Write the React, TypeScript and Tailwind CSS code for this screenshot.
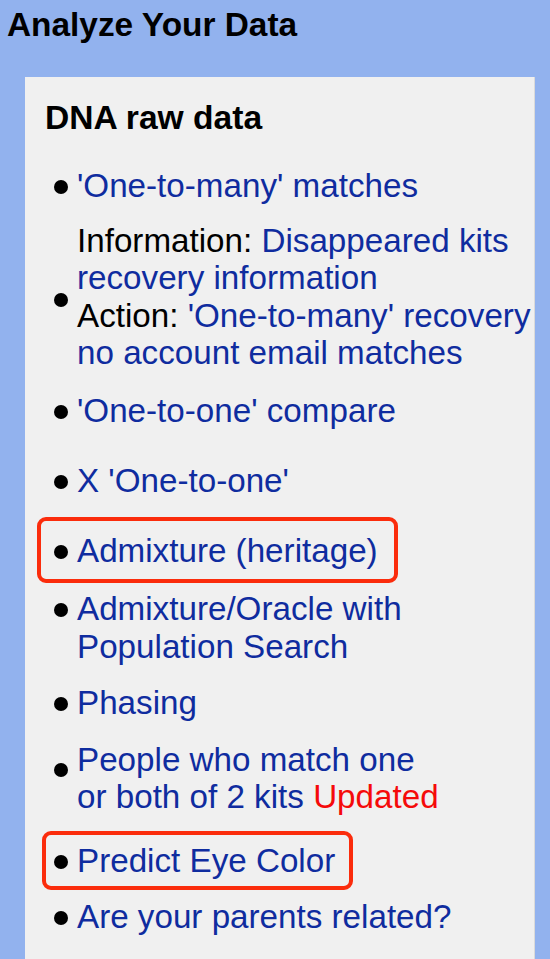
import type { ReactNode } from "react";

const link = "text-[#0f2c9f]";

type Entry = {
  key: string;
  gap: string;
  dot: string;
  body: ReactNode;
  ring?: string;
};

const entries: Entry[] = [
  {
    key: "otm",
    gap: "mt-[30px]",
    dot: "mt-[13px]",
    body: <span className={link}>'One-to-many' matches</span>,
  },
  {
    key: "recovery",
    gap: "mt-[17.5px]",
    dot: "mt-[71.3px]",
    body: (
      <>
        <div>
          Information: <span className={link}>Disappeared kits</span>
        </div>
        <div className={link}>recovery information</div>
        <div>
          Action: <span className={link}>'One-to-many' recovery</span>
        </div>
        <div className={link}>no account email matches</div>
      </>
    ),
  },
  {
    key: "oto",
    gap: "mt-[20px]",
    dot: "mt-[13px]",
    body: <span className={link}>'One-to-one' compare</span>,
  },
  {
    key: "xoto",
    gap: "mt-[33px]",
    dot: "mt-[13px]",
    body: <span className={link}>X 'One-to-one'</span>,
  },
  {
    key: "admix",
    gap: "mt-[32px]",
    dot: "mt-[13px]",
    body: <span className={link}>Admixture (heritage)</span>,
    ring: "left-[12px] -top-[14.7px] w-[361px] h-[66px]",
  },
  {
    key: "oracle",
    gap: "mt-[21px]",
    dot: "mt-[13px]",
    body: (
      <div className={link}>
        Admixture/Oracle with
        <br />
        Population Search
      </div>
    ),
  },
  {
    key: "phasing",
    gap: "mt-[19px]",
    dot: "mt-[13px]",
    body: <span className={link}>Phasing</span>,
  },
  {
    key: "people",
    gap: "mt-[19px]",
    dot: "mt-[22px]",
    body: (
      <div className={link}>
        People who match one
        <br />
        or both of 2 kits <span className="text-[#f50a0a]">Updated</span>
      </div>
    ),
  },
  {
    key: "eye",
    gap: "mt-[26px]",
    dot: "mt-[13px]",
    body: <span className={link}>Predict Eye Color</span>,
    ring: "left-[17px] -top-[11px] w-[311px] h-[59px]",
  },
  {
    key: "parents",
    gap: "mt-[19px]",
    dot: "mt-[13px]",
    body: <span className={link}>Are your parents related?</span>,
  },
];

export default function App() {
  return (
    <div className="flex h-[959px] flex-col overflow-hidden bg-[#92b2ee] font-['Liberation_Sans',Arial,sans-serif] text-black">
      <h1 className="pl-[7px] pt-[6px] text-[33.4px] font-bold leading-[38px]">
        Analyze Your Data
      </h1>

      <div className="ml-[25px] mt-[33px] w-[510px] flex-1 border-r border-[#dadada] bg-[#f0f0f0] pt-[21.6px]">
        <h2 className="pl-[20px] text-[33.6px] font-bold leading-[38px]">
          DNA raw data
        </h2>

        <ul className="text-[33.2px] leading-[37.5px]">
          {entries.map((e) => (
            <li
              key={e.key}
              className={`relative flex items-start pl-[29px] ${e.gap}`}
            >
              {/* red annotation frame */}
              {e.ring && (
                <div
                  className={`pointer-events-none absolute rounded-[9px] border-4 border-[#fb2c0c] ${e.ring}`}
                />
              )}
              <span
                className={`h-[14px] w-[14px] shrink-0 rounded-full bg-black blur-[0.6px] ${e.dot}`}
              />
              <div className="ml-[9px] whitespace-nowrap">{e.body}</div>
            </li>
          ))}
        </ul>
      </div>
    </div>
  );
}
